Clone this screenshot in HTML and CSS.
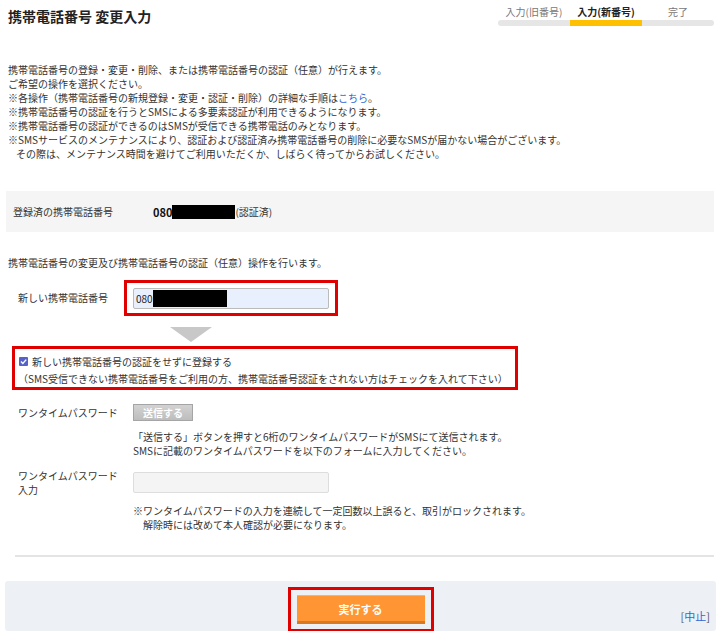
FILE: index.html
```
<!DOCTYPE html>
<html lang="ja">
<head>
    <meta charset="UTF-8">
    <meta name="viewport" content="width=device-width, initial-scale=1.0">
    <title>携帯電話番号 変更入力</title>
    <link rel="stylesheet" href="styles.css">
</head>
<body>
    <div class="header">
        <h1 class="title">携帯電話番号 変更入力</h1>
        <div class="steps">
            <div class="step-labels">
                <span>入力(旧番号)</span>
                <span class="current">入力(新番号)</span>
                <span>完了</span>
            </div>
            <div class="step-bar">
                <span></span>
                <span class="on"></span>
                <span></span>
            </div>
        </div>
    </div>

    <div class="intro">
        <div>携帯電話番号の登録・変更・削除、または携帯電話番号の認証（任意）が行えます。</div>
        <div>ご希望の操作を選択ください。</div>
        <div>※各操作（携帯電話番号の新規登録・変更・認証・削除）の詳細な手順は<a href="#" class="link">こちら</a>。</div>
        <div>※携帯電話番号の認証を行うとSMSによる多要素認証が利用できるようになります。</div>
        <div>※携帯電話番号の認証ができるのはSMSが受信できる携帯電話のみとなります。</div>
        <div>※SMSサービスのメンテナンスにより、認証および認証済み携帯電話番号の削除に必要なSMSが届かない場合がございます。</div>
        <div class="indent">その際は、メンテナンス時間を避けてご利用いただくか、しばらく待ってからお試しください。</div>
    </div>

    <div class="reg-box">
        <span class="reg-label">登録済の携帯電話番号</span>
        <span class="reg-num">080</span><span class="redact"></span><span>(認証済)</span>
    </div>

    <p class="lead">携帯電話番号の変更及び携帯電話番号の認証（任意）操作を行います。</p>

    <div class="row phone-row">
        <span class="label">新しい携帯電話番号</span>
        <div class="hl">
            <div class="field filled"><span>080</span><span class="redact"></span></div>
        </div>
    </div>

    <div class="arrow"></div>

    <div class="check-box">
        <div class="check-line">
            <span class="checkbox">
                <svg width="9" height="9" viewBox="0 0 9 9"><path d="M2 4.6 L3.8 6.4 L7.2 2.6" fill="none" stroke="#fff" stroke-width="1.4"/></svg>
            </span>
            <span>新しい携帯電話番号の認証をせずに登録する</span>
        </div>
        <div class="check-note">（SMS受信できない携帯電話番号をご利用の方、携帯電話番号認証をされない方はチェックを入れて下さい）</div>
    </div>

    <div class="row otp-row">
        <span class="label">ワンタイムパスワード</span>
        <div><button class="send-btn">送信する</button></div>
        <div class="help">
            <div>「送信する」ボタンを押すと6桁のワンタイムパスワードがSMSにて送信されます。</div>
            <div>SMSに記載のワンタイムパスワードを以下のフォームに入力してください。</div>
        </div>
    </div>

    <div class="row otp-input-row">
        <span class="label">ワンタイムパスワード<br>入力</span>
        <div class="field otp-field"></div>
        <div class="note">
            <div>※ワンタイムパスワードの入力を連続して一定回数以上誤ると、取引がロックされます。</div>
            <div class="indent-1">解除時には改めて本人確認が必要になります。</div>
        </div>
    </div>

    <div class="divider"></div>

    <div class="footer">
        <div class="exec-wrap">
            <button class="exec-btn">実行する</button>
        </div>
        <span class="cancel">[<a href="#" class="link">中止</a>]</span>
    </div>
</body>
</html>
```

FILE: styles.css
```
* {
    margin: 0;
    padding: 0;
    box-sizing: border-box;
}

body {
    width: 720px;
    font-family: "Noto Sans CJK JP", "Noto Sans", sans-serif;
    font-size: 10px;
    color: #333;
    background: #fff;
}

.link {
    color: #3466d6;
    text-decoration: none;
}

/* header */
.header {
    display: flex;
    justify-content: space-between;
    height: 26px;
    padding: 0 6px 0 8px;
}

.title {
    margin-top: 6px;
    font-size: 14px;
    line-height: 20px;
    font-weight: bold;
    color: #222;
}

.steps {
    width: 216px;
    padding-top: 5px;
}

.step-labels {
    display: flex;
    line-height: 14px;
    color: #777;
}

.step-labels span {
    flex: 1;
    text-align: center;
}

.step-labels .current {
    color: #222;
    font-weight: bold;
}

.step-bar {
    display: flex;
    height: 6px;
    margin-top: 1px;
    border-radius: 3px;
    overflow: hidden;
    background: #e6e6e6;
}

.step-bar span {
    flex: 1;
}

.step-bar .on {
    background: #ffc000;
}

/* intro */
.intro {
    margin-top: 37px;
    padding-left: 8px;
    line-height: 14px;
}

.intro .indent {
    padding-left: 8px;
}

.reg-box {
    display: flex;
    align-items: center;
    height: 41px;
    margin: 30px 6px 0;
    padding-left: 7px;
    background: #f5f5f5;
}

.reg-label {
    width: 140px;
}

.reg-num {
    font-size: 11px;
    font-weight: bold;
    color: #111;
}

.redact {
    display: inline-block;
    width: 63px;
    height: 14px;
    background: #000;
}

.lead {
    margin-top: 24px;
    padding-left: 8px;
    line-height: 14px;
}

/* form rows */
.row {
    display: grid;
    grid-template-columns: 115px 1fr;
    padding-left: 18px;
}

.row .label {
    line-height: 14px;
}

.phone-row {
    margin-top: 10px;
    align-items: center;
}

.hl {
    width: 214px;
    margin-left: -9px;
    padding: 5px 6px 4px;
    border: 3px solid #e00000;
}

.field {
    width: 196px;
    height: 21px;
    border: 1px solid #bbb;
    border-radius: 2px;
}

.field.filled {
    display: flex;
    align-items: center;
    padding-left: 2px;
    background: #e8f0fe;
    color: #222;
}

.field.filled .redact {
    width: 74px;
    height: 17px;
}

.arrow {
    width: 0;
    height: 0;
    margin: 11px 0 0 170px;
    border-left: 21px solid transparent;
    border-right: 21px solid transparent;
    border-top: 15px solid #c8c8c8;
}

.check-box {
    width: 506px;
    height: 44px;
    margin: 4px 0 0 12px;
    padding: 4px 0 0 3px;
    border: 3px solid #e00000;
    line-height: 17px;
}

.check-line {
    display: flex;
    align-items: center;
}

.checkbox {
    display: flex;
    align-items: center;
    justify-content: center;
    width: 9px;
    height: 9px;
    margin: 0 4px 0 1px;
    border-radius: 1px;
    background: #5662c9;
}

.otp-row {
    margin-top: 14px;
}

.otp-row .label {
    align-self: center;
}

.send-btn {
    width: 60px;
    height: 17px;
    border: 1px solid #a5a5a5;
    background: linear-gradient(#d2d2d2, #bdbdbd);
    color: #fff;
    font-family: inherit;
    font-size: 10px;
    font-weight: bold;
    line-height: 14px;
}

.help {
    grid-column: 2;
    margin-top: 9px;
    line-height: 14px;
}

.otp-input-row {
    margin-top: 11px;
}

.otp-field {
    margin-top: 3px;
    border-color: #ddd;
    background: #f4f4f4;
}

.note {
    grid-column: 2;
    margin-top: 7px;
    line-height: 14px;
}

.note .indent-1 {
    padding-left: 10px;
}

.divider {
    height: 2px;
    margin: 23px 6px 0 15px;
    background: #e4e4e4;
}

/* footer */
.footer {
    display: grid;
    grid-template-columns: 1fr auto 1fr;
    height: 50px;
    margin: 24px 4px 0 5px;
    padding-top: 6px;
    border-radius: 3px;
    background: #edf1f5;
}

.exec-wrap {
    grid-column: 2;
    height: 45px;
    padding: 5px 6px;
    border: 3px solid #e00000;
}

.exec-btn {
    width: 128px;
    height: 29px;
    border: none;
    border-top: 1px solid #ffb066;
    border-bottom: 3px solid #d97a22;
    background: #ff9633;
    color: #fff;
    font-family: inherit;
    font-size: 11px;
    font-weight: bold;
}

.cancel {
    justify-self: end;
    align-self: end;
    margin: 0 6px 9px 0;
    font-size: 11px;
    line-height: 14px;
    color: #555;
}
```
